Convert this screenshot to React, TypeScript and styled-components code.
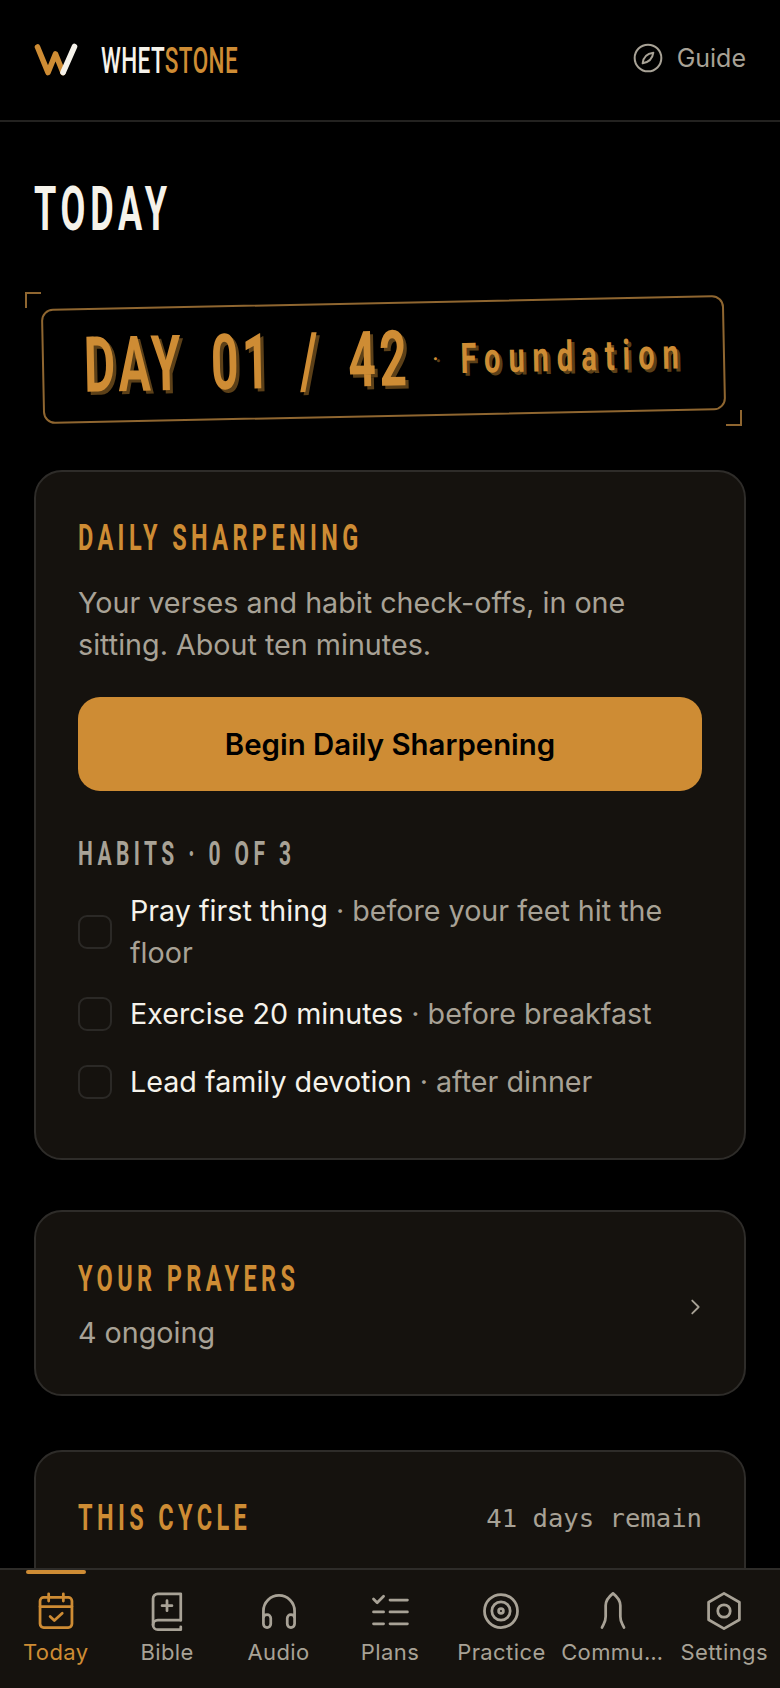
import styled, { createGlobalStyle } from "styled-components";

const gold = "#ce8c34";
const cream = "#f5f2ea";
const muted = "#a8a296";
const panel = "#15120e";
const line = "#2e2c29";

const GlobalStyle = createGlobalStyle`
  html, body {
    margin: 0;
    padding: 0;
    height: 1688px;
    overflow: hidden;
    background: #000;
    font-family: Inter, "Noto Sans", sans-serif;
    color: ${cream};
  }
  * { box-sizing: border-box; }
`;

// display type: the original uses a tall condensed face, so a bold sans is stretched upward
const Tall = styled.span<{ $size: number; $stretch: number; $spacing: number; $color?: string; $box: number; $word?: number; $weight?: number }>`
  display: inline-block;
  font-family: Roboto, "Liberation Sans", sans-serif;
  font-weight: ${p => p.$weight || 700};
  font-size: ${p => p.$size}px;
  letter-spacing: ${p => p.$spacing}px;
  word-spacing: ${p => p.$word || 0}px;
  line-height: ${p => p.$box}px;
  height: ${p => p.$box}px;
  color: ${p => p.$color || "inherit"};
  white-space: nowrap;
  transform: scaleY(${p => p.$stretch});
  transform-origin: center;
`;

const Accent = styled.span`
  color: ${gold};
`;

const Page = styled.div`
  width: 780px;
  height: 1688px;
  overflow: hidden;
  position: relative;
`;

const Header = styled.header`
  height: 122px;
  padding: 0 34px;
  display: flex;
  align-items: center;
  justify-content: space-between;
  border-bottom: 2px solid #232220;
`;

const Brand = styled.div`
  display: flex;
  align-items: center;
  gap: 23px;
`;

const GuideLink = styled.div`
  display: flex;
  align-items: center;
  gap: 13px;
  color: ${muted};
  font-size: 25px;
  margin-top: -4px;
`;

const Main = styled.main`
  padding: 0 34px;
`;

const TitleRow = styled.div`
  margin-top: 63px;
  height: 50px;
`;

const BadgeWrap = styled.div`
  position: relative;
  margin: 59px 0 0 8px;
  width: 683px;
  height: 142px;
  padding-top: 8px;
`;

const Badge = styled.div`
  height: 115px;
  border: 2px solid #8f6630;
  border-radius: 12px;
  transform: rotate(-1.17deg);
  display: flex;
  align-items: center;
  padding: 0 0 0 40px;
  color: ${gold};
  text-shadow: 3px 2px 0 #5c4018;
`;

const Bracket = styled.span<{ $corner: "tl" | "br" }>`
  position: absolute;
  width: 16px;
  height: 16px;
  border: 0 solid #8f6630;
  ${p => p.$corner === "tl"
    ? "left: -17px; top: -2px; border-top-width: 2px; border-left-width: 2px;"
    : "right: -17px; bottom: 10px; border-bottom-width: 2px; border-right-width: 2px;"}
`;

const Dot = styled.span`
  font-size: 18px;
  font-weight: 700;
  margin: 0 22px 0 22px;
`;

const Card = styled.section<{ $height: number; $top: number }>`
  height: ${p => p.$height}px;
  margin-top: ${p => p.$top}px;
  background: ${panel};
  border: 2px solid ${line};
  border-radius: 28px;
  padding: 0 42px;
`;

const CardHead = styled.div<{ $pad: number }>`
  padding-top: ${p => p.$pad}px;
  height: ${p => p.$pad + 36}px;
  display: flex;
  align-items: center;
  justify-content: space-between;
`;

const Lead = styled.p`
  margin: 26px 0 0;
  font-size: 28.7px;
  line-height: 42px;
  color: ${muted};
`;

const PrimaryButton = styled.button`
  display: block;
  width: 624px;
  height: 94px;
  margin-top: 31px;
  border: 0;
  border-radius: 22px;
  background: ${gold};
  color: #000;
  font-family: inherit;
  font-size: 29.4px;
  font-weight: 600;
`;

const HabitsLabel = styled.div`
  margin-top: 45px;
  height: 36px;
`;

const HabitList = styled.ul`
  list-style: none;
  margin: 18px 0 0;
  padding: 0;
  display: flex;
  flex-direction: column;
  gap: 12px;
`;

const Habit = styled.li`
  display: flex;
  align-items: center;
  gap: 18px;
  font-size: 28.7px;
  line-height: 42px;
  min-height: 56px;

  &:first-child {
    min-height: 84px;
  }
`;

const Check = styled.span`
  flex: 0 0 34px;
  width: 34px;
  height: 34px;
  border: 2px solid #2b2926;
  border-radius: 9px;
`;

const Note = styled.span`
  color: ${muted};
`;

const PrayerRow = styled.div`
  height: 100%;
  padding-top: 8px;
  display: flex;
  align-items: center;
  justify-content: space-between;
  margin-right: -4px;
`;

const Ongoing = styled.div`
  margin-top: 15px;
  font-size: 28.7px;
  line-height: 42px;
  color: ${muted};
`;

const Remain = styled.span`
  font-family: "DejaVu Sans Mono", "Liberation Mono", monospace;
  font-size: 25.6px;
  color: ${muted};
`;

const BottomNav = styled.nav`
  position: absolute;
  left: 0;
  right: 0;
  bottom: 0;
  height: 120px;
  background: ${panel};
  border-top: 2px solid ${line};
  display: grid;
  grid-template-columns: repeat(7, 1fr);
`;

const NavItem = styled.div<{ $active?: boolean }>`
  position: relative;
  display: flex;
  flex-direction: column;
  align-items: center;
  padding-top: 19px;
  min-width: 0;
  color: ${p => (p.$active ? gold : muted)};
  ${p => p.$active && `
    &::before {
      content: "";
      position: absolute;
      top: 0;
      left: 26px;
      width: 60px;
      height: 4px;
      border-radius: 2px;
      background: ${gold};
    }
  `}
`;

const NavLabel = styled.span`
  display: block;
  width: 100%;
  padding: 0 4px;
  margin-top: 4px;
  font-size: 22px;
  line-height: 30px;
  font-weight: 400;
  text-align: center;
  letter-spacing: 0.4px;
  white-space: nowrap;
  overflow: hidden;
  text-overflow: ellipsis;
`;

const NavIcon = styled.svg`
  width: 44px;
  height: 44px;
  fill: none;
  stroke: currentColor;
  stroke-width: 1.5;
  stroke-linecap: round;
  stroke-linejoin: round;
`;

const icons: { label: string; active?: boolean; art: React.ReactNode }[] = [
  {
    label: "Today",
    active: true,
    art: (
      <>
        <rect x="3.3" y="4.6" width="17.4" height="16.4" rx="2" />
        <path d="M3.3 9.6h17.4M8 2.6v4M16 2.6v4M8.8 15l2.3 2.2 4.3-4" />
      </>
    ),
  },
  {
    label: "Bible",
    art: (
      <>
        <path d="M19.5 17V2.6H7a2.6 2.6 0 0 0-2.6 2.6v14.4" />
        <path d="M19.5 17H7a2.6 2.6 0 0 0 0 5.2h12.5v-1.6M12 6.4v5.4M9.3 9.1h5.4" />
      </>
    ),
  },
  {
    label: "Audio",
    art: (
      <path d="M3.5 19v-7a8.5 8.5 0 0 1 17 0v7a2 2 0 0 1-4 0v-3a2 2 0 0 1 4 0M3.5 19a2 2 0 0 0 4 0v-3a2 2 0 0 0-4 0" />
    ),
  },
  {
    label: "Plans",
    art: <path d="M3 5.5l2 2 3.5-3.5M12 6h9.5M3 12.5h5.5M12 12.5h9.5M3 19h5.5M12 19h9.5" />,
  },
  {
    label: "Practice",
    art: (
      <>
        <circle cx="12" cy="12" r="9" />
        <circle cx="12" cy="12" r="5" />
        <circle cx="12" cy="12" r="1.3" />
      </>
    ),
  },
  {
    label: "Community",
    art: <path d="M6 21c1.2-2.6 2-3 2-6V9c0-2.8 2-5 4-6.6 2 1.6 4 3.8 4 6.6v6c0 3 .8 3.4 2 6" />,
  },
  {
    label: "Settings",
    art: (
      <>
        <path d="M12 2.4l8.4 4.8v9.6L12 21.6l-8.4-4.8V7.2z" />
        <circle cx="12" cy="12" r="3.4" />
      </>
    ),
  },
];

const habits = [
  { name: "Pray first thing", note: " · before your feet hit the floor" },
  { name: "Exercise 20 minutes", note: " · before breakfast" },
  { name: "Lead family devotion", note: " · after dinner" },
];

const App = () => (
  <Page>
    <GlobalStyle />
    <Header>
      <Brand>
        <svg width="44" height="34" viewBox="0 0 44 34" fill="none" strokeWidth="5.6" strokeLinecap="round" strokeLinejoin="round">
          <path d="M3.5 4L14 29.5 21.5 11 29 29.5" stroke={gold} />
          <path d="M29 29.5L40.5 3.5" stroke={cream} />
        </svg>
        <Tall $size={22.5} $stretch={1.62} $spacing={0.4} $box={36} $weight={500}>
          WHET<Accent>STONE</Accent>
        </Tall>
      </Brand>
      <GuideLink>
        <svg width="32" height="32" viewBox="0 0 24 24" fill="none" stroke="currentColor" strokeWidth="1.5" strokeLinejoin="round">
          <circle cx="12" cy="12" r="10" />
          <path d="M16 8c-.6 4.4-3.2 7.2-8 8 .4-4.6 3.4-7.4 8-8z" />
        </svg>
        Guide
      </GuideLink>
    </Header>
    <Main>
      <TitleRow>
        <Tall $size={36} $stretch={1.68} $spacing={4.8} $box={50}>TODAY</Tall>
      </TitleRow>
      <BadgeWrap>
        <Bracket $corner="tl" />
        <Bracket $corner="br" />
        <Badge>
          <Tall $size={48} $stretch={1.61} $spacing={3.5} $box={60} $word={11.5}>DAY 01 / 42</Tall>
          <Dot>·</Dot>
          <Tall $size={29} $stretch={1.45} $spacing={8} $box={40}>Foundation</Tall>
        </Badge>
      </BadgeWrap>
      <Card $height={690} $top={34}>
        <CardHead $pad={48}>
          <Tall $size={23.5} $stretch={1.55} $spacing={4.4} $box={36} $color={gold}>DAILY SHARPENING</Tall>
        </CardHead>
        <Lead>Your verses and habit check-offs, in one sitting. About ten minutes.</Lead>
        <PrimaryButton>Begin Daily Sharpening</PrimaryButton>
        <HabitsLabel>
          <Tall $size={21} $stretch={1.55} $spacing={4.4} $box={36} $color={muted}>HABITS · 0 OF 3</Tall>
        </HabitsLabel>
        <HabitList>
          {habits.map(h => (
            <Habit key={h.name}>
              <Check />
              <span>{h.name}<Note>{h.note}</Note></span>
            </Habit>
          ))}
        </HabitList>
      </Card>
      <Card $height={186} $top={50}>
        <PrayerRow>
          <div>
            <Tall $size={23.5} $stretch={1.55} $spacing={4.4} $box={36} $color={gold}>YOUR PRAYERS</Tall>
            <Ongoing>4 ongoing</Ongoing>
          </div>
          <svg width="22" height="22" viewBox="0 0 24 24" fill="none" stroke={muted} strokeWidth="2" strokeLinecap="round" strokeLinejoin="round">
            <path d="M9 5l7 7-7 7" />
          </svg>
        </PrayerRow>
      </Card>
      <Card $height={400} $top={54}>
        <CardHead $pad={48}>
          <Tall $size={23.5} $stretch={1.55} $spacing={4.4} $box={36} $color={gold}>THIS CYCLE</Tall>
          <Remain>41 days remain</Remain>
        </CardHead>
      </Card>
    </Main>
    <BottomNav>
      {icons.map(i => (
        <NavItem key={i.label} $active={i.active}>
          <NavIcon viewBox="0 0 24 24">{i.art}</NavIcon>
          <NavLabel>{i.label}</NavLabel>
        </NavItem>
      ))}
    </BottomNav>
  </Page>
);

export default App;
